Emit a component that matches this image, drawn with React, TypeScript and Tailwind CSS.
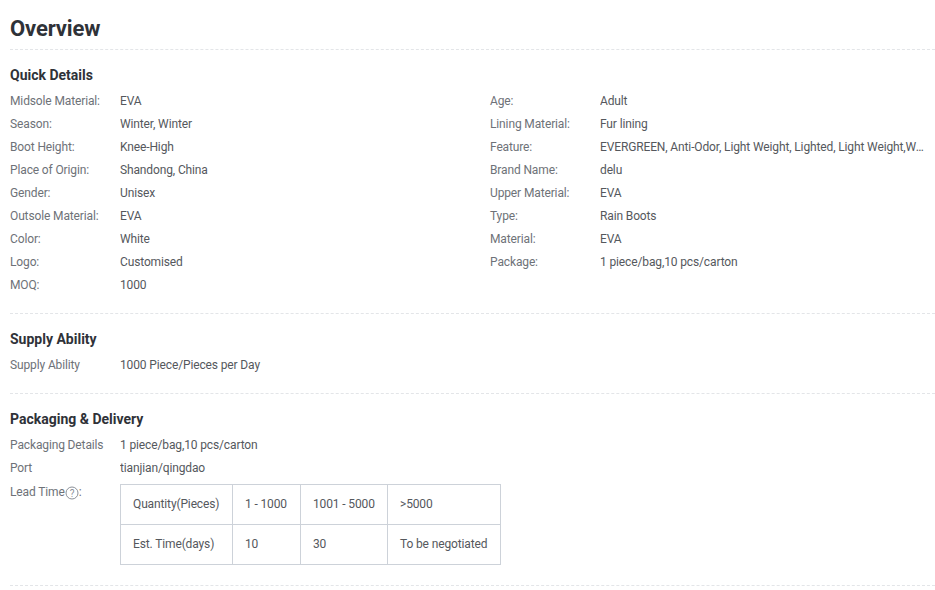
const left: [string, string][] = [
  ["Midsole Material:", "EVA"],
  ["Season:", "Winter, Winter"],
  ["Boot Height:", "Knee-High"],
  ["Place of Origin:", "Shandong, China"],
  ["Gender:", "Unisex"],
  ["Outsole Material:", "EVA"],
  ["Color:", "White"],
  ["Logo:", "Customised"],
  ["MOQ:", "1000"],
];
const right: [string, string][] = [
  ["Age:", "Adult"],
  ["Lining Material:", "Fur lining"],
  ["Feature:", "EVERGREEN, Anti-Odor, Light Weight, Lighted, Light Weight,Waterproof"],
  ["Brand Name:", "delu"],
  ["Upper Material:", "EVA"],
  ["Type:", "Rain Boots"],
  ["Material:", "EVA"],
  ["Package:", "1 piece/bag,10 pcs/carton"],
];

function Row({ label, value }: { label: string; value: string }) {
  return (
    <div className="flex h-[23px] items-center leading-[23px]">
      <div className="w-[110px] shrink-0 text-[#6e7278]">{label}</div>
      <div className="w-[325px] truncate text-[#55585d]">{value}</div>
    </div>
  );
}

function Heading({ children }: { children: string }) {
  return <h3 className="text-[14px] leading-[20px] font-bold tracking-normal text-[#2f3238]">{children}</h3>;
}

const cell = "border border-[#cdd2d9] px-3 pb-[2px] whitespace-nowrap font-normal text-left text-[#55585d]";

export default function App() {
  return (
    <div className="h-[590px] w-[935px] overflow-hidden bg-white pl-[10px] text-[12px] tracking-[-0.13px] font-['Roboto',sans-serif]">
      <h1 className="border-b border-dashed border-[#e3e5e8] pt-[14px] pb-[6px] text-[22px] leading-[29px] font-bold tracking-[-0.13px] text-[#2f3238]">
        Overview
      </h1>
      <section className="border-b border-dashed border-[#e3e5e8] pt-[15px] pb-[16px]">
        <Heading>Quick Details</Heading>
        <div className="mt-[5px] flex">
          <div className="w-[480px]">
            {left.map(([l, v]) => <Row key={l} label={l} value={v} />)}
          </div>
          <div>
            {right.map(([l, v]) => <Row key={l} label={l} value={v} />)}
          </div>
        </div>
      </section>
      <section className="border-b border-dashed border-[#e3e5e8] pt-[15px] pb-[16px]">
        <Heading>Supply Ability</Heading>
        <div className="mt-[5px]">
          <Row label="Supply Ability" value="1000 Piece/Pieces per Day" />
        </div>
      </section>
      <section className="border-b border-dashed border-[#e3e5e8] pt-[15px] pb-[20px]">
        <Heading>Packaging &amp; Delivery</Heading>
        <div className="mt-[5px]">
          <Row label="Packaging Details" value="1 piece/bag,10 pcs/carton" />
          <Row label="Port" value="tianjian/qingdao" />
          <div className="flex items-start">
            <div className="flex h-[23px] w-[110px] shrink-0 items-center text-[#6e7278]">
              Lead Time
              <svg width="14" height="14" viewBox="0 0 14 14" className="mt-[3px]">
                <circle cx="7" cy="7" r="6" fill="none" stroke="#8b9098" strokeWidth="1" />
                <text x="7" y="10.5" textAnchor="middle" fontSize="10" fill="#8b9098" fontFamily="Roboto, sans-serif">?</text>
              </svg>
              :
            </div>
            <table className="mt-[4px] h-[81px] w-[380px] table-fixed border-collapse">
              <colgroup>
                <col className="w-[112px]" />
                <col className="w-[68px]" />
                <col className="w-[87px]" />
                <col className="w-[113px]" />
              </colgroup>
              <tbody>
                <tr className="h-[40px]">
                  <td className={cell}>Quantity(Pieces)</td>
                  <td className={cell}>1 - 1000</td>
                  <td className={cell}>1001 - 5000</td>
                  <td className={cell}>&gt;5000</td>
                </tr>
                <tr className="h-[40px]">
                  <td className={cell}>Est. Time(days)</td>
                  <td className={cell}>10</td>
                  <td className={cell}>30</td>
                  <td className={cell}>To be negotiated</td>
                </tr>
              </tbody>
            </table>
          </div>
        </div>
      </section>
    </div>
  );
}
